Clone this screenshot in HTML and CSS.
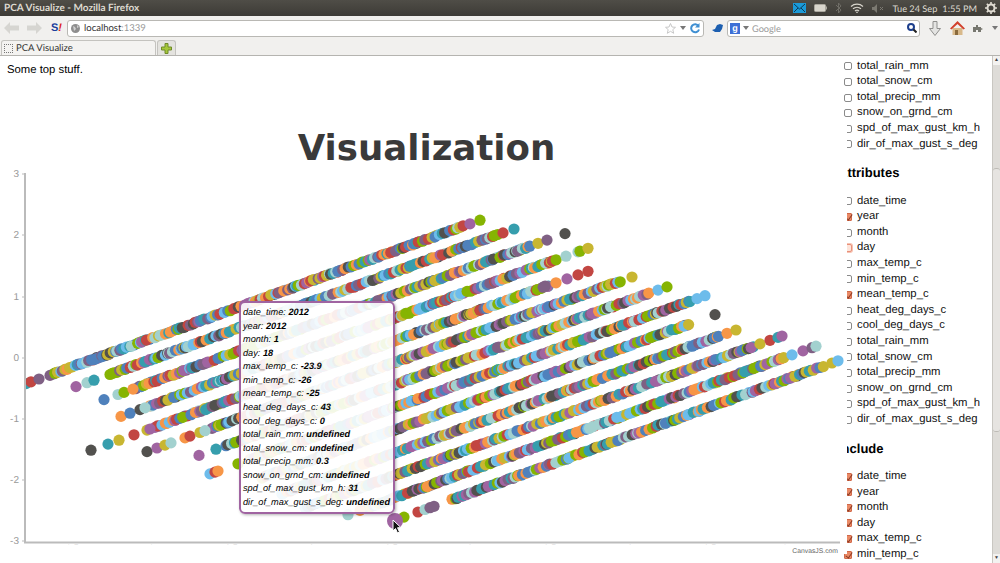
FILE: index.html
```html
<!DOCTYPE html>
<html lang="en">
<head>
<meta charset="utf-8">
<title>PCA Visualize</title>
<link rel="stylesheet" href="styles.css">
</head>
<body>
<header class="chrome">
  <div class="titlebar">
    <span class="wintitle">PCA Visualize - Mozilla Firefox</span>
    <div class="panel">
      <svg class="ind" width="13" height="10" viewBox="0 0 13 10"><rect width="13" height="10" fill="#1b9ad8"/><path d="M1 1l5.500 5L12 1M1 9l4-4M12 9L8 5" fill="none" stroke="#0c3a58" stroke-width="1"/></svg>
      <svg class="ind" width="13" height="8" viewBox="0 0 13 8"><rect x=".5" y=".5" width="11" height="7" rx="1" fill="#d8d5cc" stroke="#aaa79e"/><rect x="12" y="2.500" width="1" height="3" fill="#aaa79e"/></svg>
      <svg class="ind" width="7" height="12" viewBox="0 0 7 12"><path d="M1 3l5 5-2.500 3V1L6 4 1 9" fill="none" stroke="#6f6d66" stroke-width="1"/></svg>
      <svg class="ind" width="14" height="10" viewBox="0 0 14 10"><path d="M1 3.500a9 9 0 0 1 12 0M3 5.800a6 6 0 0 1 8 0M5 8a3 3 0 0 1 4 0" fill="none" stroke="#d8d5cc" stroke-width="1.200"/><circle cx="7" cy="9.300" r=".8" fill="#d8d5cc"/></svg>
      <svg class="ind" width="12" height="9" viewBox="0 0 12 9"><path d="M0 3h2l3-3v9L2 6H0z" fill="#7b7971"/><path d="M8 3l3 3M11 3L8 6" stroke="#7b7971" fill="none"/></svg>
      <span class="clock">Tue 24 Sep</span>
      <span class="clock">1:55 PM</span>
      <svg class="gear" width="12" height="12" viewBox="0 0 12 12"><circle cx="6" cy="6" r="3.500" fill="none" stroke="#dfdbd2" stroke-width="2"/><path d="M6 0v2.500M6 9.500V12M0 6h2.500M9.500 6H12M1.800 1.800l1.800 1.800M8.400 8.400l1.800 1.800M1.800 10.200l1.800-1.800M8.400 3.600l1.800-1.800" stroke="#dfdbd2" stroke-width="1.600"/></svg>
    </div>
  </div>
  <div class="navbar">
    <svg class="nav-arrow" width="15" height="12" viewBox="0 0 15 12"><path d="M0 6l6-6v3.500h9v5H6V12z" fill="#d6d5d1"/></svg>
    <svg class="nav-arrow" width="15" height="12" viewBox="0 0 15 12"><path d="M15 6L9 0v3.500H0v5h9V12z" fill="#d6d5d1"/></svg>
    <span class="sbadge">S<i>!</i></span>
    <div class="urlbar">
      <svg width="9" height="9" viewBox="0 0 9 9"><circle cx="4.500" cy="4.500" r="4.500" fill="#8e8e8e"/><path d="M2 2l2 1 1 2-2 2zM6 1l2 2-2 1z" fill="#d0d0d0"/></svg>
      <span class="url">localhost<span class="port">:1339</span></span>
      <span class="spacer"></span>
      <svg width="11" height="11" viewBox="0 0 11 11"><path d="M5.500.5l1.500 3.500 3.500.3-2.700 2.300.9 3.700-3.200-2-3.200 2 .9-3.700L.5 4.300 4 4z" fill="#fff" stroke="#c8c8c8"/></svg>
      <span class="drop"></span>
      <svg width="10" height="11" viewBox="0 0 10 11"><path d="M8.500 3A4 4 0 1 0 9 6.500" fill="none" stroke="#3f8fd2" stroke-width="2"/><path d="M9.500 0v4.500H5z" fill="#3f8fd2"/></svg>
    </div>
    <svg class="bird" width="11" height="9" viewBox="0 0 11 9"><path d="M0 6l3-1 2-4 3-1 3 1-1 4-2 3H3z" fill="#1d5fb0"/></svg>
    <div class="searchbar">
      <span class="gicon">g</span>
      <span class="drop"></span>
      <span class="searchtext">Google</span>
      <span class="spacer"></span>
      <svg width="10" height="10" viewBox="0 0 10 10"><circle cx="4" cy="4" r="3" fill="#fff" stroke="#1d3f8c" stroke-width="2"/><path d="M6.500 6.500L9.500 9.500" stroke="#222" stroke-width="2"/></svg>
    </div>
    <svg class="dl" width="12" height="15" viewBox="0 0 12 15"><path d="M4 .5h4v7h3.500L6 14.500.5 7.500H4z" fill="#e4e4e2" stroke="#8f8f8d"/></svg>
    <svg class="home" width="15" height="14" viewBox="0 0 15 14"><path d="M2.500 7v7h10V7z" fill="#d8b98a"/><path d="M0 7.500L7.500 0 15 7.500l-1.500 1L7.500 3l-6 5.500z" fill="#d2402c"/><rect x="5" y="9" width="3" height="5" fill="#8a6a3c"/></svg>
    <svg class="puzzle" width="10" height="8" viewBox="0 0 10 8"><path d="M0 3h3V1h2v2h3v1l2 1-2 1v2H5V6H3v2H0z" fill="#77776f"/></svg>
    <span class="drop navdrop"></span>
  </div>
  <div class="tabbar">
    <div class="tab"><span class="favicon"></span>PCA Visualize</div>
    <div class="newtab"><svg width="11" height="11" viewBox="0 0 11 11"><path d="M4 .5h3v3.500h3.500v3H7v3.500H4V7H.5V4H4z" fill="#a4c639" stroke="#6f8a2a"/></svg></div>
  </div>
</header>

<main class="page">
  <div class="content">
    <p class="topstuff">Some top stuff.</p>
  </div>

  <aside class="sidebar">
    <ul class="checks">
      <li><input type="checkbox" class="box">total_rain_mm</li>
      <li><input type="checkbox" class="box">total_snow_cm</li>
      <li><input type="checkbox" class="box">total_precip_mm</li>
      <li><input type="checkbox" class="box">snow_on_grnd_cm</li>
      <li><input type="checkbox" class="box">spd_of_max_gust_km_h</li>
      <li><input type="checkbox" class="box">dir_of_max_gust_s_deg</li>
    </ul>
    <h3 class="group">Attributes</h3>
    <ul class="checks">
      <li><input type="checkbox" class="box">date_time</li>
      <li><input type="checkbox" class="box" checked>year</li>
      <li><input type="checkbox" class="box">month</li>
      <li><input type="checkbox" class="box focus">day</li>
      <li><input type="checkbox" class="box">max_temp_c</li>
      <li><input type="checkbox" class="box">min_temp_c</li>
      <li><input type="checkbox" class="box" checked>mean_temp_c</li>
      <li><input type="checkbox" class="box">heat_deg_days_c</li>
      <li><input type="checkbox" class="box">cool_deg_days_c</li>
      <li><input type="checkbox" class="box">total_rain_mm</li>
      <li><input type="checkbox" class="box">total_snow_cm</li>
      <li><input type="checkbox" class="box">total_precip_mm</li>
      <li><input type="checkbox" class="box">snow_on_grnd_cm</li>
      <li><input type="checkbox" class="box">spd_of_max_gust_km_h</li>
      <li><input type="checkbox" class="box">dir_of_max_gust_s_deg</li>
    </ul>
    <h3 class="group">Include</h3>
    <ul class="checks">
      <li><input type="checkbox" class="box" checked>date_time</li>
      <li><input type="checkbox" class="box" checked>year</li>
      <li><input type="checkbox" class="box" checked>month</li>
      <li><input type="checkbox" class="box" checked>day</li>
      <li><input type="checkbox" class="box" checked>max_temp_c</li>
      <li><input type="checkbox" class="box" checked>min_temp_c</li>
    </ul>
  </aside>

  <div class="scrollbar">
    <div class="sb-btn">&#9650;</div>
    <div class="sb-gap-top"></div>
    <div class="sb-thumb"></div>
    <div class="sb-gap-bottom"></div>
    <div class="sb-btn">&#9660;</div>
  </div>

  <div class="chart">
    <svg class="plot" width="847" height="434" viewBox="0 120 847 434">
      <defs>
        <clipPath id="plotclip"><rect x="26" y="120" width="821" height="421"/></clipPath>
        <clipPath id="xlabelclip"><rect x="0" y="543" width="847" height="2"/></clipPath>
      </defs>
      <text class="title" x="426.500" y="160">Visualization</text>
      <g class="axis-lines">
        <path d="M25 173V542.500H840"/>
        <path d="M22 174h3M22 235h3M22 297h3M22 358h3M22 419h3M22 480h3M22 541h3"/>
      </g>
      <g class="ylabels">
        <text x="19" y="177">3</text>
        <text x="19" y="238">2</text>
        <text x="19" y="300">1</text>
        <text x="19" y="361">0</text>
        <text x="19" y="422">-1</text>
        <text x="19" y="483">-2</text>
        <text x="19" y="544">-3</text>
      </g>
      <g class="xlabels" clip-path="url(#xlabelclip)">
        <text x="71" y="551">-2.5</text>
        <text x="150" y="551">-2</text>
        <text x="230" y="551">-1.5</text>
        <text x="310" y="551">-1</text>
        <text x="390" y="551">-0.5</text>
        <text x="470" y="551">0</text>
        <text x="550" y="551">0.5</text>
        <text x="630" y="551">1</text>
        <text x="710" y="551">1.5</text>
        <text x="785" y="551">2</text>
      </g>
      <g id="dots" clip-path="url(#plotclip)"></g>
      <text class="credit" x="838" y="553">CanvasJS.com</text>
      <path class="cursor" d="M393 520v11l2.500-2.500 2 4.500 2-1-2-4.300h3.500z"/>
    </svg>
    <div class="tooltip">
      <div><i>date_time:</i> <b>2012</b></div>
      <div><i>year:</i> <b>2012</b></div>
      <div><i>month:</i> <b>1</b></div>
      <div><i>day:</i> <b>18</b></div>
      <div><i>max_temp_c:</i> <b>-23.9</b></div>
      <div><i>min_temp_c:</i> <b>-26</b></div>
      <div><i>mean_temp_c:</i> <b>-25</b></div>
      <div><i>heat_deg_days_c:</i> <b>43</b></div>
      <div><i>cool_deg_days_c:</i> <b>0</b></div>
      <div><i>total_rain_mm:</i> <b>undefined</b></div>
      <div><i>total_snow_cm:</i> <b>undefined</b></div>
      <div><i>total_precip_mm:</i> <b>0.3</b></div>
      <div><i>snow_on_grnd_cm:</i> <b>undefined</b></div>
      <div><i>spd_of_max_gust_km_h:</i> <b>31</b></div>
      <div><i>dir_of_max_gust_s_deg:</i> <b>undefined</b></div>
    </div>
  </div>
</main>
<script src="chart.js"></script>
</body>
</html>
```

FILE: styles.css
```css
* { box-sizing: border-box; }
html, body { margin: 0; height: 563px; overflow: hidden; background: #fff; }
body { font-family: "Liberation Sans", Arial, sans-serif; text-rendering: geometricPrecision; }

.chrome { height: 55px; display: flex; flex-direction: column; font-family: Lato, "Open Sans", sans-serif; }
.titlebar { height: 16px; flex: none; display: flex; align-items: center; justify-content: space-between; background: linear-gradient(#4f4d47, #3d3b36); color: #dfdbd2; font-size: 10px; padding-left: 4px; }
.wintitle { font-weight: 700; }
.panel { display: flex; align-items: center; }
.ind { margin-right: 8px; flex: none; }
.clock { font-size: 9.200px; margin-right: 4px; white-space: nowrap; margin-left: 1px; }
.gear { margin: 0 3px 0 4px; flex: none; }

.navbar { height: 24px; flex: none; display: flex; align-items: center; background: #f1f0ee; padding-left: 4px; }
.nav-arrow { margin-right: 8px; flex: none; }
.sbadge { font: 700 11px "Liberation Sans", sans-serif; color: #1b3f9c; width: 16px; margin-left: 1px; }
.sbadge i { color: #d22; }
.urlbar { width: 637px; height: 17px; display: flex; align-items: center; gap: 4px; background: #fff; border: 1px solid #b9b8b4; border-radius: 3px; padding: 0 3px; }
.url { font-size: 9.500px; color: #333; }
.port { color: #9a9a9a; }
.spacer { flex: 1; }
.drop { width: 0; height: 0; border: 3px solid transparent; border-top: 4px solid #777; border-bottom: 0; flex: none; }
.bird { margin: 0 5px 0 8px; flex: none; }
.searchbar { width: 193px; height: 17px; display: flex; align-items: center; gap: 3px; background: #fff; border: 1px solid #b9b8b4; border-radius: 3px; padding: 0 2px; margin-left: -1px; }
.gicon { width: 10px; height: 11px; background: #3d6fd6; color: #fff; font: 700 9px/10px "Liberation Sans", sans-serif; text-align: center; }
.searchtext { font-size: 9.200px; color: #999; }
.dl { margin-left: 9px; flex: none; }
.home { margin-left: 9px; flex: none; }
.puzzle { margin-left: 8px; flex: none; }
.navdrop { margin-left: 9px; }

.tabbar { height: 15px; flex: none; display: flex; align-items: flex-end; background: #f1f0ee; padding-left: 1px; }
.tab { width: 155px; height: 15px; border: 1px solid #c4c3bf; border-bottom: 0; border-radius: 3px 3px 0 0; background: #f4f3f1; font-size: 9.500px; line-height: 13px; color: #333; display: flex; align-items: center; gap: 3px; padding: 1px 0 0 2px; }
.favicon { width: 9px; height: 9px; border: 1px dotted #777; }
.newtab { width: 19px; height: 15px; margin-left: 1px; border: 1px solid #c4c3bf; border-bottom: 0; border-radius: 3px 3px 0 0; background: #e4e3df; display: flex; align-items: center; justify-content: center; }

.page { position: relative; height: 508px; display: flex; border-top: 1px solid #b5b4b0; overflow: hidden; }
.content { flex: 1; padding: 7px 0 0 7px; }
.topstuff { margin: 0; font-size: 11.300px; line-height: 15px; color: #000; }

.sidebar { width: 148px; flex: none; padding-top: 2.700px; font-size: 11.300px; color: #111; }
.checks { list-style: none; margin: 0; padding: 0; }
.checks li { height: 15.600px; line-height: 15.600px; display: flex; align-items: center; white-space: nowrap; }
.group { margin: 12.200px 0 11.200px -6px; font-size: 13px; line-height: 18px; font-weight: 700; color: #000; }

.box { appearance: none; -webkit-appearance: none; width: 8px; height: 8px; margin: 0 5px 0 0; flex: none; border: 1px solid #8a8a8a; border-radius: 2px; background: #fff; position: relative; }
.box:checked { background: #ea8a66; border-color: #d0694a; border-radius: 1px; }
.box:checked::after { content: ""; position: absolute; left: 1.500px; top: -1px; width: 3px; height: 6px; border: solid #8a3a24; border-width: 0 1.500px 1.500px 0; transform: rotate(35deg); }
.box.focus { background: #fde4da; border-color: #e8907a; box-shadow: 0 0 0 1px #f7c3b2; }

.scrollbar { width: 8px; flex: none; display: flex; flex-direction: column; background: #dedcd8; border-left: 1px solid #c9c7c2; }
.sb-btn { height: 9px; flex: none; background: #f3f2f0; font-size: 5px; line-height: 9px; text-align: center; color: #444; }
.sb-gap-top { height: 103px; flex: none; background: #dedcd8; }
.sb-thumb { height: 264px; flex: none; background: #e6e4e1; border: 1px solid #bcbab5; border-width: 1px 0; border-radius: 3px; }
.sb-gap-bottom { flex: 1; background: #dedcd8; }

.chart { position: absolute; left: 0; top: 64px; width: 847px; height: 434px; background: #fff; }
.plot { display: block; font-family: "Liberation Sans", Arial, sans-serif; }
.title { font: 700 35.600px "DejaVu Sans", Verdana, sans-serif; fill: #3a3a3a; text-anchor: middle; }
.axis-lines path { fill: none; stroke: #bbb; stroke-width: 2; }
.axis-lines path + path { stroke-width: 1; }
.ylabels text { font-size: 10px; fill: #999; text-anchor: end; }
.xlabels text { font-size: 9px; fill: #aaa; text-anchor: middle; }
.credit { font-size: 6.800px; fill: #666; text-anchor: end; }
.cursor { fill: #111; stroke: #fff; stroke-width: 1; }

.tooltip { position: absolute; left: 239px; top: 181px; width: 156px; height: 213px; padding: 3px 0 0 2px; border: 2px solid #a064a1; border-radius: 6px; background: rgba(255, 255, 255, .9); box-shadow: 1px 1px 3px rgba(0, 0, 0, .3); font-size: 9.200px; line-height: 13.570px; color: #000; white-space: nowrap; }
.tooltip b { font-weight: 700; font-style: italic; }
```

FILE: chart.js
```js
(function () {
  var A = "#369EAD", B = "#C24642", C = "#7F6084", D = "#86B402", E = "#A2D1CF",
      F = "#C8B631", G = "#6DBCEB", H = "#52514E", I = "#4F81BC", J = "#A064A1", K = "#F79647";
  var COLORS = [A, B, C, D, E, F, G, H, I, J, K];
  var SLOPE = 0.36;
  var LINES = [
    { c: 249, from: 50, to: 465, pts: [[26, A], [31, B], [39, C], [470, J], [480, D]] },
    { c: 270, from: 110, to: 498, pts: [[76, J], [87, E], [94, A], [503, B], [514, A]] },
    { c: 293, from: 136, to: 532, pts: [[104, I], [118, E], [124, D], [133, K], [538, F], [547, C], [565, H]] },
    { c: 316, from: 150, to: 558, pts: [[121, K], [130, I], [140, H], [145, E], [566, E], [578, E], [580, D], [588, F]] },
    { c: 339, from: 155, to: 550, pts: [[91, H], [108, A], [119, F], [134, B], [147, F], [150, J], [556, K], [567, J], [578, B], [588, B]] },
    { c: 360.5, from: 212, to: 622, pts: [[147, H], [157, J], [165, F], [171, E], [185, K], [190, B], [200, F], [205, E], [632, F]] },
    { c: 383, from: 226, to: 650, pts: [[199, J], [216, A], [658, G], [667, D]] },
    { c: 405.5, from: 250, to: 690, pts: [[210, G], [215, B], [218, K], [238, D], [697, G], [705, G]] },
    { c: 428, from: 262, to: 690, pts: [[715, H]] },
    { c: 451, from: 282, to: 720, pts: [[727, K], [736, F]] },
    { c: 473.5, from: 305, to: 756, pts: [[760, F], [770, B], [778, A], [782, J]] },
    { c: 496, from: 368, to: 786, pts: [[348, E], [360, K], [792, G], [803, J], [812, C], [816, E]] },
    { c: 518.5, from: 452, to: 825, pts: [[404, D], [418, B], [425, E], [430, C], [434, C], [832, F], [838, G]] }
  ];
  var seed = 1339;
  function rnd() {
    seed = (seed + 0x6D2B79F5) | 0;
    var t = Math.imul(seed ^ (seed >>> 15), 1 | seed);
    t = (t + Math.imul(t ^ (t >>> 7), 61 | t)) ^ t;
    return ((t ^ (t >>> 14)) >>> 0) / 4294967296;
  }
  var g = document.getElementById("dots");
  var NS = "http://www.w3.org/2000/svg";
  function dot(x, y, r, fill) {
    var el = document.createElementNS(NS, "circle");
    el.setAttribute("cx", x.toFixed(1));
    el.setAttribute("cy", y.toFixed(1));
    el.setAttribute("r", r);
    el.setAttribute("fill", fill);
    g.appendChild(el);
  }
  LINES.forEach(function (l) {
    var items = [], x;
    for (x = l.from; x <= l.to; x += 0.8 + rnd() * 3) {
      items.push({ x: x, key: x + rnd() * 5 });
    }
    items.sort(function (a, b) { return a.key - b.key; });
    items.forEach(function (it) {
      var jitter = (rnd() - 0.5) * 1.2;
      dot(it.x, l.c - SLOPE * (it.x - 400) + jitter, 5.6, COLORS[Math.floor(rnd() * COLORS.length)]);
    });
    l.pts.forEach(function (p) {
      dot(p[0], l.c - SLOPE * (p[0] - 400), 5.6, p[1]);
    });
  });
  dot(395, 521, 8, J);
})();
```
